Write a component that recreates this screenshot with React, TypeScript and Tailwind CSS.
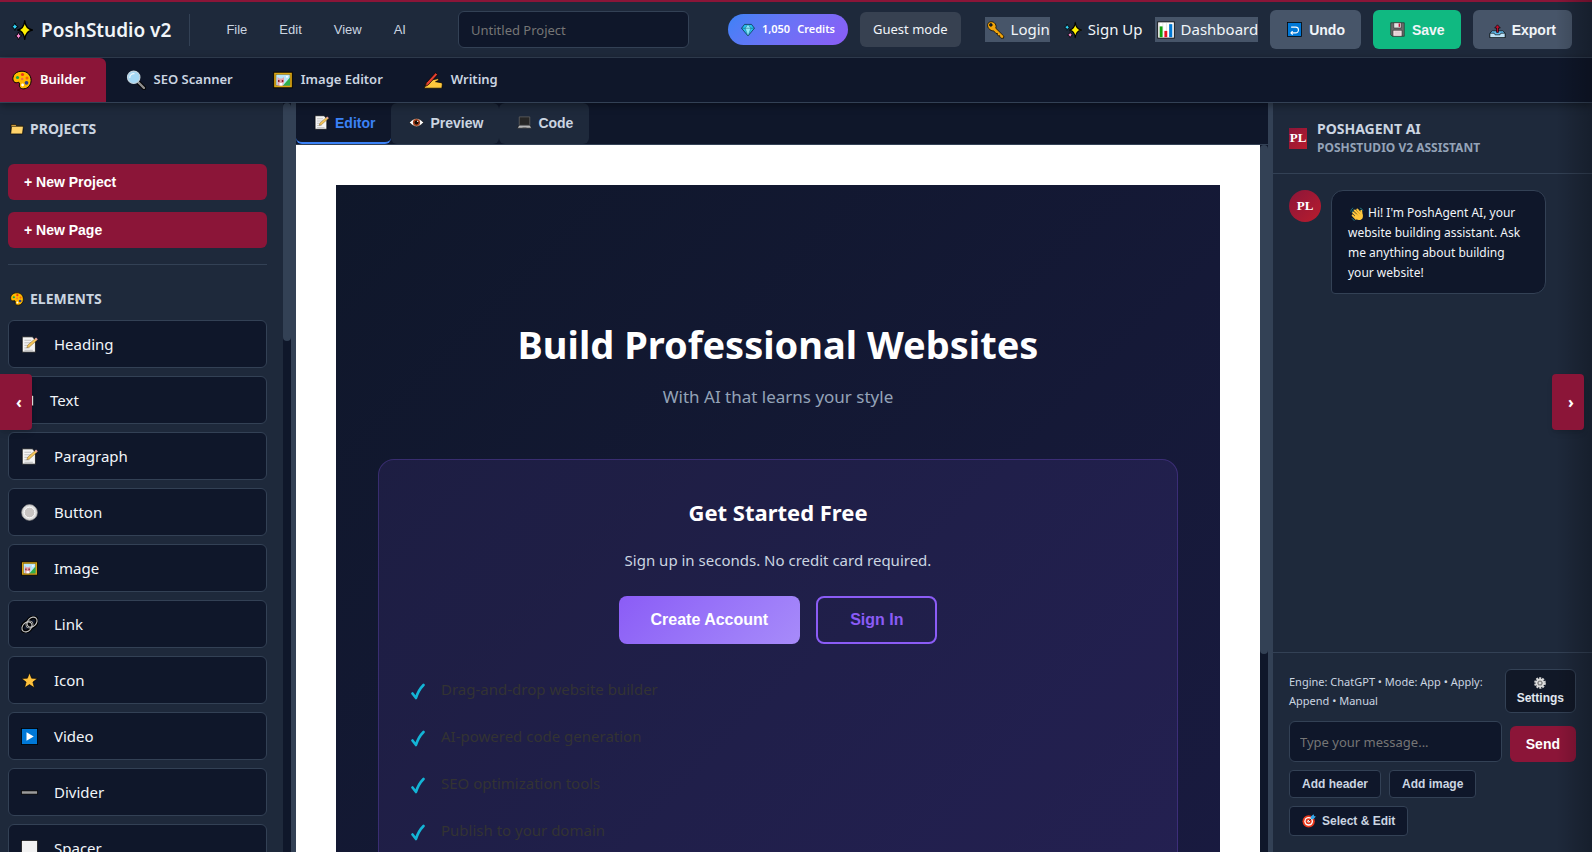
import React from 'react';

type IconName =
  | 'sparkles' | 'palette' | 'search' | 'frame' | 'writing' | 'folder' | 'memo' | 'page'
  | 'eye' | 'laptop' | 'gem' | 'key' | 'chart' | 'undo' | 'disk' | 'outbox' | 'radio'
  | 'link' | 'star' | 'play' | 'minus' | 'square' | 'wave' | 'gear' | 'target';

const drawings: Record<IconName, React.ReactNode> = {
  sparkles: (
    <g stroke="#000" strokeLinejoin="round">
      <path d="M12.500 1.500Q13.300 9 19.500 10Q13.300 11 12.500 18.500Q11.700 11 6 10Q11.700 9 12.500 1.500Z" fill="#fff100" strokeWidth="1.200" />
      <path d="M3.500 3.500Q4 6.500 6.500 7Q4 7.500 3.500 10.500Q3 7.500.7 7Q3 6.500 3.500 3.500Z" fill="#31d2f7" strokeWidth=".8" />
      <path d="M6.800 12Q7.300 14.900 9.800 15.400Q7.300 15.900 6.800 18.800Q6.300 15.900 4 15.400Q6.300 14.900 6.800 12Z" fill="#f989d0" strokeWidth=".8" />
    </g>
  ),
  palette: (
    <g>
      <path d="M10 1.200C4.500 1.200.9 4.500.9 8.600c0 3.500 2.600 4.600 4.600 3.900 1.400-.5 2.300.2 2 1.700-.5 2.600.6 4.700 4.200 4.600 4.300-.1 7.400-3.800 7.400-8.400 0-5.300-3.900-9.200-9.100-9.200Z" fill="#ffb900" stroke="#000" strokeWidth="1" />
      <circle cx="10.500" cy="4.500" r="1.600" fill="#f03a17" /><circle cx="5.500" cy="7.500" r="1.600" fill="#16a34a" />
      <circle cx="10.200" cy="9" r="1.200" fill="#ef6950" /><circle cx="15" cy="8" r="1.500" fill="#f7630c" />
      <circle cx="14.500" cy="12.800" r="1.900" fill="#30418c" /><circle cx="10.600" cy="15" r="1.400" fill="#fff" />
    </g>
  ),
  search: (
    <g strokeLinecap="round">
      <path d="M12.500 12.500 18 18" stroke="#000" strokeWidth="4.200" />
      <path d="M12.500 12.500 18 18" stroke="#8f8f8f" strokeWidth="2.400" />
      <circle cx="7.700" cy="7.300" r="6.200" fill="#a5d8f5" stroke="#c5d5df" strokeWidth="1.200" />
      <path d="M3.800 7.500A4 4 0 0 1 8 3.600" stroke="#fff" strokeWidth="1.200" fill="none" opacity=".8" />
    </g>
  ),
  frame: (
    <g>
      <rect x=".7" y="2.200" width="18.600" height="15.600" fill="#d9a514" stroke="#000" strokeWidth=".9" />
      <rect x="3" y="4.400" width="14" height="11.200" fill="#b8e6fb" stroke="#7a5c00" strokeWidth=".5" />
      <path d="M10 15.600 17 7.500v8.100Z" fill="#2fae4a" />
      <path d="M4.500 15.600V7l2 1.500h2.700L11 7v5l-1.500 3.600Z" fill="#e8a3a8" />
      <path d="M5 10h1.500v2H5zM8.800 10h1.500v2H8.800z" fill="#8b1d2c" /><path d="M6.500 13h3v2.600h-3z" fill="#fff" />
      <circle cx="14" cy="6.800" r="1" fill="#fff" />
    </g>
  ),
  writing: (
    <g stroke="#000" strokeWidth=".7" strokeLinejoin="round">
      <path d="M1.200 18.200 3 12.500 8.500 10l6-1.200c1.300-.2 1.600 1.300.5 1.800l-2.500 1.100 5.700 1c.9.200 1.200 1 1.100 1.800l-.4 3.700H1.200Z" fill="#ffc83d" />
      <path d="m2.300 16.400 1-3.600L12.600 2.700l2 1.900L5.200 15Z" fill="#e4402f" />
    </g>
  ),
  folder: (
    <g stroke="#000" strokeWidth=".9" strokeLinejoin="round">
      <path d="M1.500 16.500V3.500h6.500l1.500 2h8.500v11Z" fill="#e0ab45" />
      <path d="M1 17 2.300 6.200H19.200L17.800 17Z" fill="#ffd36b" />
    </g>
  ),
  memo: (
    <g>
      <path d="M1.500 1h12l3.500 4v14H1.500Z" fill="#f4f4f4" stroke="#000" strokeWidth=".8" />
      <path d="M4 5h8M4 8h9M4 11h7M4 14h6M4 16.800h10" stroke="#b5b5b5" strokeWidth="1" />
      <path d="m6.800 13.800 1.300-3.300L17.300 2.500l2 2L10 12.900Z" fill="#f3c55b" stroke="#6b4a10" strokeWidth=".5" />
      <path d="m16.300 3.400 1.400-1.500 2 2-1.400 1.400Z" fill="#e8a0a0" />
    </g>
  ),
  page: (
    <g>
      <path d="M1 1h15l3 3.500V19H1Z" fill="#f4f4f4" stroke="#000" strokeWidth=".8" />
      <path d="M4 6h9M4 9h11M4 12h11M4 15h11" stroke="#b5b5b5" />
    </g>
  ),
  eye: (
    <g>
      <path d="M.5 10Q10-1 19.500 10 10 21 .5 10Z" fill="#fff" stroke="#000" strokeWidth=".8" />
      <circle cx="10" cy="10" r="4.800" fill="#a4401c" /><circle cx="10" cy="10" r="2.600" fill="#160a05" />
      <circle cx="11.500" cy="8.400" r=".9" fill="#fff" />
    </g>
  ),
  laptop: (
    <g stroke="#000" strokeWidth=".6">
      <path d="M3 2.500h14v11H3Z" fill="#262626" stroke="#666" strokeWidth="1" />
      <path d="M2.700 13.500h14.600l2.200 4H.5Z" fill="#b5b5b5" /><path d="M7.500 16h5l.3 1.400H7.200Z" fill="#777" stroke="none" />
    </g>
  ),
  gem: (
    <g stroke="#04283b" strokeWidth="1" strokeLinejoin="round">
      <path d="M5 2h10l4.200 5.500L10 18.500.8 7.500Z" fill="#27c1ee" />
      <path d="M6 7.500 10 2l4 5.500-4 11Z" fill="#8ce9fc" strokeWidth=".4" />
      <path d="M.8 7.500h18.400" strokeWidth=".5" />
    </g>
  ),
  key: (
    <g stroke="#000" strokeWidth=".8" strokeLinejoin="round">
      <path d="M1.300 2.300C3.500-.2 8.500.5 9.800 4.500c.5 1.400.3 2.500-.1 3.500l9 8.800-.4 2.400-2.800-.1-1.200-1.300-.2-1.500-1.500.2-1-1.200v-1.500l-1.500.1-2.800-3C3.800 11.400-1.300 6.500 1.300 2.300Z" fill="#f2a50c" />
      <circle cx="4.300" cy="4.400" r="1.500" fill="#1e293b" />
    </g>
  ),
  chart: (
    <g>
      <rect x=".8" y="1" width="18.400" height="18" fill="#fff" stroke="#000" strokeWidth=".9" />
      <path d="M2.500 2v16M6.500 2v16M10.500 2v16M14.500 2v16" stroke="#c9c9c9" strokeWidth=".5" />
      <path d="M3 6h3.200v12H3Z" fill="#13a10e" /><path d="M8.200 11h3.200v7H8.200Z" fill="#e81224" /><path d="M13.500 3.500h3.500V18h-3.500Z" fill="#0078d4" />
    </g>
  ),
  undo: (
    <g>
      <rect x=".8" y=".8" width="18.400" height="18.400" fill="#0078d7" stroke="#000" strokeWidth="1" />
      <path d="M5 14.500h6.500a3.800 3.800 0 0 0 0-7.600H5.500M5 14.500l2.600-2.400M5 14.500l2.600 2.400" fill="none" stroke="#fff" strokeWidth="1.500" />
    </g>
  ),
  disk: (
    <g stroke="#222" strokeWidth=".8">
      <path d="M1 1h18v18H3l-2-2Z" fill="#6b6b6b" />
      <path d="M5 1h10v7H5Z" fill="#e3e3e3" /><path d="M11.500 2h2v4.500h-2Z" fill="#c2183c" stroke="none" />
      <path d="M4 11h12v8H4Z" fill="#fbe6ea" /><path d="M6 13.500h8M6 16h8" stroke="#b9a5a9" />
    </g>
  ),
  outbox: (
    <g stroke="#000" strokeWidth=".8" strokeLinejoin="round">
      <path d="M3.500 11h13l3 3V19.500H.5V14Z" fill="#5fb6e6" />
      <path d="M.5 14h5.300L7 16h6l1.200-2h5.300v5.500H.5Z" fill="#bfe3f7" />
      <path d="M8.800 13V7.500H6.500L10 3.500l3.500 4h-2.300V13Z" fill="#c50f2f" />
    </g>
  ),
  radio: (
    <g>
      <circle cx="10" cy="10" r="9.300" fill="#dcdcdc" stroke="#8b8b8b" strokeWidth=".8" />
      <circle cx="10" cy="10" r="6.300" fill="#c9c5c3" stroke="#fff" strokeWidth="1.100" />
    </g>
  ),
  link: (
    <g fill="none">
      <g stroke="#000" strokeWidth="4.400"><ellipse cx="7" cy="12.600" rx="6.500" ry="4.800" transform="rotate(-45 7 12.600)" /><ellipse cx="13" cy="7.400" rx="6.500" ry="4.800" transform="rotate(-45 13 7.400)" /></g>
      <g stroke="#c4c4c4" strokeWidth="1.300"><ellipse cx="7" cy="12.800" rx="6.700" ry="5" transform="rotate(-45 7 12.800)" /><ellipse cx="13" cy="7.200" rx="6.700" ry="5" transform="rotate(-45 13 7.200)" /><circle cx="10" cy="10" r="4.300" strokeWidth=".9" /></g>
    </g>
  ),
  star: <path d="m10 1 2.500 6.300 6.800.4-5.300 4.200 1.800 6.600L10 14.800 4.200 18.500 6 11.900.7 7.700l6.800-.4Z" fill="#ffc23d" stroke="#000" strokeWidth=".7" />,
  play: (
    <g><rect x=".5" y=".5" width="19" height="19" fill="#0078d7" stroke="#000" strokeWidth="1" /><path d="m6.500 5 8.500 5-8.500 5Z" fill="#fff" /></g>
  ),
  minus: <rect x=".4" y="8" width="19.200" height="4" fill="#9b9b9b" stroke="#000" strokeWidth="1" />,
  square: <rect x=".5" y=".5" width="19" height="19" fill="#f2f2f2" stroke="#000" strokeWidth=".8" />,
  wave: (
    <g strokeLinecap="round">
      <path d="m4.500 8 6.500 6M7 5l6 6M10.500 3.800l5 6" stroke="#ffc83d" strokeWidth="3" />
      <path d="m3.800 12 4.700 4.800M16 5.500l.7 6" stroke="#ffc83d" strokeWidth="2.800" />
      <path d="M7 11.500 15.500 7.500 18 11c1.500 4-1 8-5.500 7.500-2.500-.3-4.500-2-5.500-4Z" fill="#ffc83d" />
      <path d="m7 7.500 4.500 4.300M9.800 5.500l4.200 4.500" stroke="#b57a12" strokeWidth=".6" />
      <path d="M1 6Q1.300 3 4 1.500M3 7.500Q3.200 5 5.300 3.800M3 16.500q1 2 3 2.500M14.500 1.500Q17.500 2 18.500 5" fill="none" stroke="#2aa6a6" strokeWidth=".9" />
    </g>
  ),
  gear: (
    <g>
      <circle cx="10" cy="10" r="8" fill="none" stroke="#d6d6d6" strokeWidth="3.500" strokeDasharray="3.300 1.750" />
      <circle cx="10" cy="10" r="5.800" fill="#666" stroke="#ddd" strokeWidth="3" />
      <circle cx="10" cy="10" r="2" fill="#ddd" /><path d="M10 4v12M4.800 7l10.400 6M15.200 7 4.800 13" stroke="#ddd" strokeWidth=".9" />
    </g>
  ),
  target: (
    <g>
      <circle cx="9.500" cy="10.500" r="8.800" fill="#e8391d" /><circle cx="9.500" cy="10.500" r="6.200" fill="#fff" />
      <circle cx="9.500" cy="10.500" r="4.300" fill="#e8391d" /><circle cx="9.500" cy="10.500" r="1.800" fill="#fff" />
      <path d="m9.500 10.500 6-6" stroke="#222" strokeWidth="1.200" /><path d="m12.500 7.500.3-4L16.500.3l.8 2.500 2.500.6-3.300 3.600Z" fill="#35a7e8" />
    </g>
  ),
};

function Icon({ name, className }: { name: IconName; className: string }) {
  return (
    <svg viewBox="0 0 20 20" aria-hidden="true" className={`shrink-0 ${className}`}>
      {drawings[name]}
    </svg>
  );
}

const ui = "font-['Noto_Sans',sans-serif]";
const arial = "font-['Liberation_Sans',Arial,sans-serif]";

const menus = ['File', 'Edit', 'View', 'AI'];

const sections: { icon: IconName; label: string }[] = [
  { icon: 'search', label: 'SEO Scanner' },
  { icon: 'frame', label: 'Image Editor' },
  { icon: 'writing', label: 'Writing' },
];

const elements: { icon: IconName; label: string }[] = [
  { icon: 'memo', label: 'Heading' },
  { icon: 'page', label: 'Text' },
  { icon: 'memo', label: 'Paragraph' },
  { icon: 'radio', label: 'Button' },
  { icon: 'frame', label: 'Image' },
  { icon: 'link', label: 'Link' },
  { icon: 'star', label: 'Icon' },
  { icon: 'play', label: 'Video' },
  { icon: 'minus', label: 'Divider' },
  { icon: 'square', label: 'Spacer' },
];

const features = [
  'Drag-and-drop website builder',
  'AI-powered code generation',
  'SEO optimization tools',
  'Publish to your domain',
];

function Header() {
  const action = `flex h-[39px] items-center gap-[6px] rounded-md px-4 text-sm font-bold text-[#f1f5f9] ${arial}`;
  const link = 'flex h-[25px] items-center gap-[6px] pl-[2px] text-[15px] text-[#f1f5f9]';
  return (
    <header className="flex h-[58px] shrink-0 items-center border-t-2 border-b border-t-[#8b1538] border-b-[#334155] bg-[#1e293b] pr-5 pl-[11px] whitespace-nowrap">
      <Icon name="sparkles" className="h-[22px] w-[22px]" />
      <h1 className="ml-2 text-[19px] leading-7 font-semibold text-[#f1f5f9]">PoshStudio v2</h1>
      <span className="ml-[18px] h-8 w-px bg-[#334155]" />
      <nav className="ml-5 flex">
        {menus.map((m) => (
          <button key={m} className={`px-4 text-[13px] font-medium text-[#cbd5e1] ${arial}`}>{m}</button>
        ))}
      </nav>
      <input
        aria-label="Project name"
        placeholder="Untitled Project"
        className="ml-9 h-[37px] w-[231px] rounded-md border border-[#334155] bg-[#0f172a] px-3 text-[13px] text-[#e2e8f0] placeholder:text-[#757575]"
      />
      <div className="ml-auto flex items-center gap-3">
        <div className="flex h-[31px] items-center gap-[7px] rounded-full bg-linear-135 from-[#3b82f6] to-[#8b5cf6] px-[13px] text-[11px] font-semibold text-white">
          <Icon name="gem" className="h-[14px] w-[14px]" />
          <span>1,050</span>
          <span>Credits</span>
        </div>
        <span className="mr-3 flex h-[35px] items-center rounded-md bg-[#374151] px-[13px] text-[13px] text-[#f1f5f9]">Guest mode</span>
        <a href="#login" className={`${link} bg-[#475569]`}>
          <Icon name="key" className="h-[18px] w-[18px]" />Login
        </a>
        <a href="#signup" className={link}>
          <Icon name="sparkles" className="h-[18px] w-[18px]" />Sign Up
        </a>
        <a href="#dashboard" className={`${link} bg-[#475569]`}>
          <Icon name="chart" className="h-[18px] w-[18px]" />Dashboard
        </a>
        <button className={`${action} bg-[#475569]`}><Icon name="undo" className="h-[15px] w-[17px]" />Undo</button>
        <button className={`${action} bg-[#10b981]`}><Icon name="disk" className="h-[15px] w-[17px]" />Save</button>
        <button className={`${action} bg-[#475569]`}><Icon name="outbox" className="h-[16px] w-[17px]" />Export</button>
      </div>
    </header>
  );
}

function SectionNav() {
  return (
    <nav className="relative z-10 flex h-[45px] shrink-0 border-b border-[#334155] bg-[#0f172a] text-[13px] font-semibold shadow-[0_2px_8px_rgba(0,0,0,0.4)]">
      <button className="flex items-center gap-2 rounded-tr-md bg-[#8b1538] pr-5 pl-3 text-white">
        <Icon name="palette" className="h-5 w-5" />Builder
      </button>
      {sections.map((s) => (
        <button key={s.label} className="flex items-center gap-2 px-5 text-[#cbd5e1]">
          <Icon name={s.icon} className="h-5 w-5" />{s.label}
        </button>
      ))}
    </nav>
  );
}

function Sidebar() {
  const primary = `h-9 w-full rounded-md bg-[#8b1538] px-4 text-left text-sm font-bold text-white ${arial}`;
  const title = 'flex items-center gap-[6px] pl-[2px] text-sm leading-5 font-bold text-[#cbd5e1]';
  return (
    <aside className="flex w-[296px] shrink-0 overflow-hidden border-r-[5px] border-[#334155] bg-[#1e293b]">
      <div className="min-w-0 flex-1 pt-4 pr-4 pl-2">
        <h2 className={title}><Icon name="folder" className="h-[14px] w-[14px]" />PROJECTS</h2>
        <div className="mt-[25px] flex flex-col gap-3 border-b border-[#334155] pb-4">
          <button className={primary}>+ New Project</button>
          <button className={primary}>+ New Page</button>
        </div>
        <h2 className={`mt-6 ${title}`}><Icon name="palette" className="h-[14px] w-[14px]" />ELEMENTS</h2>
        <ul className="mt-[11px] flex flex-col gap-2">
          {elements.map((e) => (
            <li key={e.label}>
              <button className="flex h-12 w-full items-center gap-4 rounded-md border border-[#334155] bg-[#0f172a] px-3 text-[15px] text-[#f1f5f9]">
                <Icon name={e.icon} className={e.icon === 'page' ? 'h-4 w-[13px]' : 'h-[17px] w-[17px]'} />
                {e.label}
              </button>
            </li>
          ))}
        </ul>
      </div>
      <div className="w-2 bg-[#0f172a]"><div className="h-[238px] rounded bg-[#334155]" /></div>
    </aside>
  );
}

function Workspace() {
  const tab = `flex items-center gap-[6px] rounded-md pr-4 pl-[18px] text-sm font-bold ${arial}`;
  return (
    <main className="flex min-w-0 flex-1 flex-col bg-[#0f172a]">
      <div className="flex h-[42px] shrink-0 border-b border-[#334155]">
        <button className={`${tab} border-b-2 border-[#3b82f6] text-[#3b82f6]`}><Icon name="memo" className="h-[15px] w-[15px]" />Editor</button>
        <button className={`${tab} bg-[#1e293b] pb-[2px] text-[#cbd5e1]`}><Icon name="eye" className="h-[15px] w-[15px]" />Preview</button>
        <button className={`${tab} bg-[#1e293b] pb-[2px] text-[#cbd5e1]`}><Icon name="laptop" className="h-[15px] w-[15px]" />Code</button>
      </div>
      <div className="flex min-h-0 flex-1">
        <div className="min-w-0 flex-1 overflow-hidden bg-white p-10">
          <section className="h-[1500px] bg-linear-135 from-[#0f172a] to-[#1e1b4b] px-[42px] pt-[129px] text-center">
            <h2 className="text-[38px] leading-[60px] font-bold text-white">Build Professional Websites</h2>
            <p className="mt-2 text-[17px] leading-[30px] text-[#94a3b8]">With AI that learns your style</p>
            <div className="mx-auto mt-[47px] h-[600px] max-w-[800px] rounded-2xl border border-[#8b5cf6]/25 bg-[#8b5cf6]/10 px-8 pt-[33px]">
              <h3 className="text-[22px] leading-[38px] font-bold text-white">Get Started Free</h3>
              <p className="mt-[17px] text-[15px] leading-6 text-[#cbd5e1]">Sign up in seconds. No credit card required.</p>
              <div className={`mt-6 flex justify-center gap-4 font-bold ${arial}`}>
                <button className="h-12 rounded-lg bg-linear-135 from-[#8b5cf6] to-[#a78bfa] px-8 text-white">Create Account</button>
                <button className="h-12 rounded-lg border-2 border-[#8b5cf6] px-8 text-[#8b5cf6]">Sign In</button>
              </div>
              <ul className="mt-[22px] flex flex-col text-left">
                {features.map((f) => (
                  <li key={f} className="flex h-[47px] items-center gap-4 text-[15px] text-[#333333]">
                    <svg viewBox="0 0 14 18" aria-hidden="true" className="mt-1 h-[18px] w-[14px] shrink-0">
                      <path d="M1.500 10.500 5 15C6.500 10 9 5.500 12.500 2" fill="none" stroke="#14b5d6" strokeWidth="2.600" strokeLinecap="round" strokeLinejoin="round" />
                    </svg>
                    {f}
                  </li>
                ))}
              </ul>
            </div>
          </section>
        </div>
        <div className="w-2 bg-[#0f172a]"><div className="h-[72%] rounded bg-[#334155]" /></div>
      </div>
    </main>
  );
}

function Assistant() {
  const chip = 'flex items-center rounded border border-[#334155] bg-[#0f172a] px-3 text-[#cbd5e1]';
  const badge = "flex shrink-0 items-center justify-center bg-linear-135 from-[#8b1538] to-[#b91c2c] font-['Liberation_Serif',serif] text-[13px] font-bold text-white";
  return (
    <aside className="flex w-[324px] shrink-0 flex-col border-l-[5px] border-[#334155] bg-[#1e293b]">
      <div className="flex h-[71px] shrink-0 items-center gap-[10px] border-b border-[#334155] px-4">
        <span className={`h-[21px] w-[18px] ${badge}`}>PL</span>
        <div className="font-bold">
          <h2 className="text-sm leading-5 text-[#cbd5e1]">POSHAGENT AI</h2>
          <p className="text-xs leading-[18px] text-[#94a3b8]">POSHSTUDIO V2 ASSISTANT</p>
        </div>
      </div>
      <div className="flex flex-1 items-start gap-[10px] px-4 pt-4">
        <span className={`h-8 w-8 rounded-full ${badge}`}>PL</span>
        <p className="w-[215px] rounded-xl rounded-bl border border-[#334155] bg-[#0f172a] px-4 pt-3 pb-[10px] text-xs leading-5 text-[#f1f5f9]">
          <Icon name="wave" className="mr-1 ml-[2px] inline h-[14px] w-[14px]" />
          Hi! I'm PoshAgent AI, your website building assistant. Ask me anything about building your website!
        </p>
      </div>
      <div className="border-t border-[#334155] p-4">
        <div className="flex items-start justify-between gap-3">
          <p className="pt-[3px] text-[11px] leading-[19px] text-[#cbd5e1]">Engine: ChatGPT • Mode: App • Apply: Append • Manual</p>
          <button className={`flex h-11 shrink-0 flex-col items-center justify-center rounded-md border border-[#334155] bg-[#111827] px-[11px] text-xs leading-[14px] font-bold text-[#e2e8f0] ${arial}`}>
            <Icon name="gear" className="mb-[2px] h-3 w-3" />Settings
          </button>
        </div>
        <div className="mt-2 flex items-end gap-2">
          <input
            aria-label="Message"
            placeholder="Type your message..."
            className="h-[41px] min-w-0 flex-1 rounded-md border border-[#334155] bg-[#0f172a] px-[10px] text-[13px] text-[#e2e8f0] placeholder:text-[#757575]"
          />
          <button className={`h-9 rounded-md bg-[#8b1538] px-4 text-sm font-bold text-white ${arial}`}>Send</button>
        </div>
        <div className={`mt-2 flex flex-wrap gap-2 text-xs font-bold ${arial}`}>
          <button className={`${chip} h-7`}>Add header</button>
          <button className={`${chip} h-7`}>Add image</button>
          <button className={`${chip} h-[30px] gap-[6px]`}><Icon name="target" className="h-[14px] w-[14px]" />Select &amp; Edit</button>
        </div>
      </div>
    </aside>
  );
}

export default function App() {
  const toggle = 'absolute top-[374px] z-20 flex h-14 w-8 items-center justify-center bg-[#8b1538] pl-[6px] text-base font-bold text-white shadow-md';
  return (
    <div className={`relative flex h-screen flex-col overflow-hidden bg-[#0f172a] ${ui}`}>
      <Header />
      <SectionNav />
      <div className="flex min-h-0 flex-1">
        <Sidebar />
        <Workspace />
        <Assistant />
      </div>
      <button aria-label="Collapse left panel" className={`${toggle} left-0 rounded-r`}>‹</button>
      <button aria-label="Collapse right panel" className={`${toggle} right-2 rounded`}>›</button>
      <div className="pointer-events-none absolute inset-y-0 right-0 z-10 w-9 bg-linear-to-r from-transparent to-black/25" />
    </div>
  );
}
